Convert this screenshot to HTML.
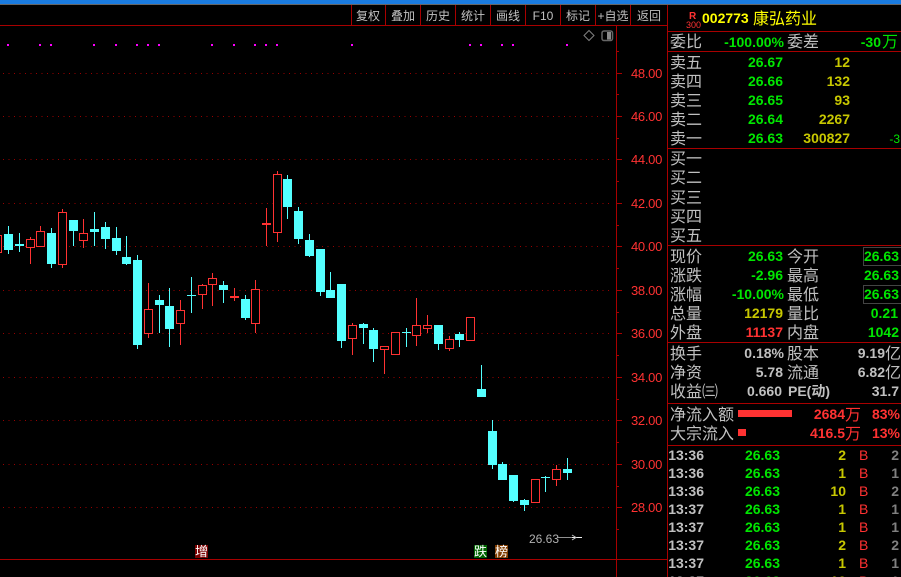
<!DOCTYPE html>
<html lang="zh"><head><meta charset="utf-8"><title>002773</title>
<style>
html,body{margin:0;padding:0;background:#000;width:901px;height:577px;overflow:hidden}
svg{display:block;position:absolute;left:0;top:0}
.c{font-family:"Liberation Sans","WenQuanYi Zen Hei","Noto Sans CJK SC",sans-serif;font-size:16px;fill:#c0c0c0}
.t{font-family:"Liberation Sans","WenQuanYi Zen Hei","Noto Sans CJK SC",sans-serif;font-size:12px;fill:#c0c0c0;text-anchor:middle}
.n{font-family:"Liberation Sans","WenQuanYi Zen Hei","Noto Sans CJK SC",sans-serif;font-size:14px;font-weight:bold;text-anchor:end}
.a{font-family:"Liberation Sans",sans-serif;font-size:13px;fill:#ff3232;letter-spacing:-.3px}
.b{font-family:"Liberation Sans",sans-serif;font-size:14px;fill:#ff3232}
.g{fill:#00e600}.y{fill:#c8c800}.r{fill:#ff3232}.w{fill:#c0c0c0}.d{fill:#808080}
</style></head><body>
<svg width="901" height="577" viewBox="0 0 901 577" xmlns="http://www.w3.org/2000/svg">
<rect width="901" height="577" fill="#000"/>
<rect width="901" height="4" fill="#1a7be0"/>
<rect y="4" width="901" height="1" fill="#666"/>

<!-- grid -->
<g stroke="#990000" stroke-width="1" stroke-dasharray="1 4.5" shape-rendering="crispEdges">
<path d="M3 73.5H612M3 116.5H612M3 159.5H612M3 203.5H612M3 246.5H612M3 290.5H612M3 333.5H612M3 377.5H612M3 420.5H612M3 464.5H612M3 507.5H612"/>
</g>

<!-- chrome lines -->
<g stroke="#a80000" stroke-width="1" shape-rendering="crispEdges" fill="none">
<path d="M0 25.5H667M351.5 5V25M385.5 5V25M420.5 5V25M455.5 5V25M490.5 5V25M525.5 5V25M560.5 5V25M595.5 5V25M630.5 5V25"/>
<path d="M616.5 25V577M667.5 5V577M0 559.5H667"/>
<path d="M668 31.5H901M668 51.5H901M668 148.5H901M668 245.5H901M668 342.5H901M668 403.5H901M668 445.5H901"/>
<path d="M617 73.5H622M617 116.5H622M617 159.5H622M617 203.5H622M617 246.5H622M617 290.5H622M617 333.5H622M617 377.5H622M617 420.5H622M617 464.5H622M617 507.5H622"/>
<path d="M617 51.5H619M617 94.5H619M617 138.5H619M617 181.5H619M617 225.5H619M617 268.5H619M617 312.5H619M617 355.5H619M617 399.5H619M617 442.5H619M617 486.5H619M617 529.5H619"/>
</g>

<!-- toolbar -->
<text class="t" x="368" y="20">复权</text>
<text class="t" x="403" y="20">叠加</text>
<text class="t" x="438" y="20">历史</text>
<text class="t" x="473" y="20">统计</text>
<text class="t" x="508" y="20">画线</text>
<text class="t" x="543" y="20">F10</text>
<text class="t" x="578" y="20">标记</text>
<text class="t" x="613" y="20">+自选</text>
<text class="t" x="649" y="20">返回</text>

<!-- magenta dots -->
<g fill="#ff00ff" shape-rendering="crispEdges">
<rect x="7" y="44" width="2" height="2"/><rect x="39" y="44" width="2" height="2"/><rect x="50" y="44" width="2" height="2"/><rect x="93" y="44" width="2" height="2"/><rect x="115" y="44" width="2" height="2"/><rect x="136" y="44" width="2" height="2"/><rect x="147" y="44" width="2" height="2"/><rect x="158" y="44" width="2" height="2"/><rect x="211" y="44" width="2" height="2"/><rect x="233" y="44" width="2" height="2"/><rect x="254" y="44" width="2" height="2"/><rect x="265" y="44" width="2" height="2"/><rect x="276" y="44" width="2" height="2"/><rect x="351" y="44" width="2" height="2"/><rect x="469" y="44" width="2" height="2"/><rect x="480" y="44" width="2" height="2"/><rect x="501" y="44" width="2" height="2"/><rect x="512" y="44" width="2" height="2"/><rect x="566" y="44" width="2" height="2"/>
</g>

<!-- top-right chart icons -->
<path d="M589 30.5L594 35.5L589 40.5L584 35.5Z" fill="none" stroke="#808080"/>
<rect x="602" y="31" width="10.500" height="9.500" rx="2" fill="none" stroke="#666" stroke-width="1.500"/>
<rect x="607" y="32" width="4" height="7.500" fill="#8a8a8a"/>

<!-- wicks -->
<g stroke="#54ffff" stroke-width="1" shape-rendering="crispEdges" fill="none">
<path d="M8.5 226V254M19.5 233V252M51.5 228V268M73.5 231V246M94.5 212V246M105.5 222V249M116.5 227V255M126.5 236V265M137.5 255V349M159.5 295V333M169.5 288V347M191.5 277V313M223.5 281V303M245.5 295V320M287.5 175V219M298.5 207V244M309.5 234V257M320.5 249V296M330.5 272V298M341.5 284V348M363.5 323V344M373.5 328V362M406.5 328V347M438.5 325V350M459.5 332V347M481.5 365V397M492.5 420V469M502.5 462V480M513.5 475V502M524.5 499V511M545.5 476V492M567.5 458V480"/>
</g>
<g stroke="#ff3232" stroke-width="1" shape-rendering="crispEdges" fill="none">
<path d="M30.5 237V264M40.5 226V247M62.5 209V268M83.5 219V248M148.5 283V338M180.5 300V345M202.5 284V309M212.5 273V306M234.5 288V301M255.5 280V333M266.5 208V246M277.5 171V242M352.5 323V355M384.5 346V374M416.5 298V346M427.5 315V333M449.5 336V351M556.5 465V486"/>
</g>
<!-- cyan bodies -->
<g fill="#54ffff" shape-rendering="crispEdges">
<rect x="4" y="234" width="9" height="16"/>
<rect x="15" y="244" width="9" height="2"/>
<rect x="47" y="233" width="9" height="31"/>
<rect x="69" y="220" width="9" height="11"/>
<rect x="90" y="229" width="9" height="3"/>
<rect x="101" y="227" width="9" height="12"/>
<rect x="112" y="238" width="9" height="13"/>
<rect x="122" y="257" width="9" height="7"/>
<rect x="133" y="260" width="9" height="85"/>
<rect x="155" y="300" width="9" height="5"/>
<rect x="165" y="306" width="9" height="23"/>
<rect x="187" y="295" width="9" height="1"/>
<rect x="219" y="285" width="9" height="5"/>
<rect x="241" y="299" width="9" height="19"/>
<rect x="283" y="179" width="9" height="28"/>
<rect x="294" y="211" width="9" height="28"/>
<rect x="305" y="240" width="9" height="16"/>
<rect x="316" y="249" width="9" height="43"/>
<rect x="326" y="290" width="9" height="8"/>
<rect x="337" y="284" width="9" height="57"/>
<rect x="359" y="324" width="9" height="4"/>
<rect x="369" y="330" width="9" height="19"/>
<rect x="402" y="332" width="9" height="1"/>
<rect x="434" y="325" width="9" height="19"/>
<rect x="455" y="334" width="9" height="6"/>
<rect x="477" y="389" width="9" height="8"/>
<rect x="488" y="431" width="9" height="34"/>
<rect x="498" y="464" width="9" height="16"/>
<rect x="509" y="475" width="9" height="26"/>
<rect x="520" y="500" width="9" height="5"/>
<rect x="541" y="477" width="9" height="1"/>
<rect x="563" y="469" width="9" height="4"/>
</g>
<!-- red bodies -->
<g fill="#000" stroke="#ff3232" stroke-width="1" shape-rendering="crispEdges">
<rect x="-8" y="235.500" width="9.500" height="17"/>
<rect x="26.500" y="239.500" width="8" height="8"/>
<rect x="36.500" y="231.500" width="8" height="15"/>
<rect x="58.500" y="212.500" width="8" height="52"/>
<rect x="79.500" y="233.500" width="8" height="7"/>
<rect x="144.500" y="309.500" width="8" height="24"/>
<rect x="176.500" y="310.500" width="8" height="13"/>
<rect x="198.500" y="285.500" width="8" height="9"/>
<rect x="208.500" y="278.500" width="8" height="6"/>
<rect x="230.500" y="296.500" width="8" height="1"/>
<rect x="251.500" y="289.500" width="8" height="34"/>
<rect x="262.500" y="223.500" width="8" height="1"/>
<rect x="273.500" y="174.500" width="8" height="58"/>
<rect x="348.500" y="325.500" width="8" height="13"/>
<rect x="380.500" y="346.500" width="8" height="3"/>
<rect x="391.500" y="332.500" width="8" height="22"/>
<rect x="412.500" y="325.500" width="8" height="10"/>
<rect x="423.500" y="325.500" width="8" height="3"/>
<rect x="445.500" y="339.500" width="8" height="9"/>
<rect x="466.500" y="317.500" width="8" height="23"/>
<rect x="531.500" y="479.500" width="8" height="23"/>
<rect x="552.500" y="469.500" width="8" height="10"/>
</g>

<!-- axis labels -->
<text class="a" x="631" y="78">48.00</text>
<text class="a" x="631" y="121">46.00</text>
<text class="a" x="631" y="164">44.00</text>
<text class="a" x="631" y="208">42.00</text>
<text class="a" x="631" y="251">40.00</text>
<text class="a" x="631" y="295">38.00</text>
<text class="a" x="631" y="338">36.00</text>
<text class="a" x="631" y="382">34.00</text>
<text class="a" x="631" y="425">32.00</text>
<text class="a" x="631" y="469">30.00</text>
<text class="a" x="631" y="512">28.00</text>

<!-- last price marker -->
<text x="529" y="543" font-family="'Liberation Sans',sans-serif" font-size="12" fill="#b0b0b0">26.63</text>
<path d="M558 537.500H572" stroke="#909090" shape-rendering="crispEdges"/>
<path d="M572 537.500H582" stroke="#f0f0f0" shape-rendering="crispEdges"/>
<path d="M572 535L576 537.500L572 540" stroke="#c0c0c0" fill="none"/>

<!-- markers -->
<rect x="195" y="545" width="13" height="13" fill="#7a0000"/>
<text x="195" y="556" font-family="'WenQuanYi Zen Hei','Noto Sans CJK SC',sans-serif" font-size="13" fill="#fff">增</text>
<rect x="474" y="545" width="13" height="13" fill="#006400"/>
<text x="474" y="556" font-family="'WenQuanYi Zen Hei','Noto Sans CJK SC',sans-serif" font-size="13" fill="#fff">跌</text>
<rect x="495" y="545" width="13" height="13" fill="#803c00"/>
<text x="495" y="556" font-family="'WenQuanYi Zen Hei','Noto Sans CJK SC',sans-serif" font-size="13" fill="#fff">榜</text>

<!-- header -->
<text x="689" y="19" font-family="'Liberation Sans',sans-serif" font-size="10" font-weight="bold" fill="#ff3232">R</text>
<text x="686" y="28" font-family="'Liberation Sans',sans-serif" font-size="9" fill="#ff3232">300</text>
<text x="702" y="23" font-family="'Liberation Sans',sans-serif" font-size="14" font-weight="bold" fill="#ffff00">002773</text>
<text x="753" y="24" font-family="'Liberation Sans','WenQuanYi Zen Hei','Noto Sans CJK SC',sans-serif" font-size="16" fill="#ffff00">康弘药业</text>

<!-- labels -->
<text class="c" x="670" y="47">委比</text><text class="c" x="787" y="47">委差</text>
<text class="c" x="670" y="68">卖五</text>
<text class="c" x="670" y="87">卖四</text>
<text class="c" x="670" y="106">卖三</text>
<text class="c" x="670" y="125">卖二</text>
<text class="c" x="670" y="144">卖一</text>
<text class="c" x="670" y="164">买一</text>
<text class="c" x="670" y="183">买二</text>
<text class="c" x="670" y="203">买三</text>
<text class="c" x="670" y="222">买四</text>
<text class="c" x="670" y="241">买五</text>
<text class="c" x="670" y="262">现价</text><text class="c" x="787" y="262">今开</text>
<text class="c" x="670" y="281">涨跌</text><text class="c" x="787" y="281">最高</text>
<text class="c" x="670" y="300">涨幅</text><text class="c" x="787" y="300">最低</text>
<text class="c" x="670" y="319">总量</text><text class="c" x="787" y="319">量比</text>
<text class="c" x="670" y="338">外盘</text><text class="c" x="787" y="338">内盘</text>
<text class="c" x="670" y="359">换手</text><text class="c" x="787" y="359">股本</text>
<text class="c" x="670" y="378">净资</text><text class="c" x="787" y="378">流通</text>
<text class="c" x="670" y="397">收益㈢</text>
<text class="c" x="670" y="420">净流入额</text>
<text class="c" x="670" y="439">大宗流入</text>

<!-- order book values -->
<text class="n g" x="784" y="47">-100.00%</text><text class="n g" x="881" y="47">-30</text><text class="c g" x="882" y="47">万</text>
<text class="n g" x="783" y="67">26.67</text><text class="n y" x="850" y="67">12</text>
<text class="n g" x="783" y="86">26.66</text><text class="n y" x="850" y="86">132</text>
<text class="n g" x="783" y="105">26.65</text><text class="n y" x="850" y="105">93</text>
<text class="n g" x="783" y="124">26.64</text><text class="n y" x="850" y="124">2267</text>
<text class="n g" x="783" y="143">26.63</text><text class="n y" x="850" y="143">300827</text>
<text x="900" y="143" text-anchor="end" font-family="'Liberation Sans',sans-serif" font-size="12" class="g">-3</text>

<!-- quote values -->
<rect x="863.500" y="247.500" width="38" height="18" fill="none" stroke="#444" shape-rendering="crispEdges"/>
<rect x="863.500" y="285.500" width="38" height="18" fill="none" stroke="#444" shape-rendering="crispEdges"/>
<text class="n g" x="783" y="261">26.63</text><text class="n g" x="899" y="261">26.63</text>
<text class="n g" x="783" y="280">-2.96</text><text class="n g" x="899" y="280">26.63</text>
<text class="n g" x="784" y="299">-10.00%</text><text class="n g" x="899" y="299">26.63</text>
<text class="n y" x="783" y="318">12179</text><text class="n g" x="898" y="318">0.21</text>
<text class="n r" x="783" y="337">11137</text><text class="n g" x="899" y="337">1042</text>
<text class="n w" x="784" y="358">0.18%</text><text class="n w" x="885" y="358">9.19</text><text class="c" x="885" y="359">亿</text>
<text class="n w" x="783" y="377">5.78</text><text class="n w" x="885" y="377">6.82</text><text class="c" x="885" y="378">亿</text>
<text class="n w" x="782" y="396">0.660</text><text class="n w" x="830" y="396">PE(动)</text><text class="n w" x="899" y="396">31.7</text>

<!-- flow -->
<rect x="738" y="410" width="54" height="7" fill="#ff3232"/>
<rect x="738" y="429" width="8" height="7" fill="#ff3232"/>
<text class="n r" x="845" y="419">2684</text><text class="c r" x="845" y="420">万</text><text class="n r" x="900" y="419">83%</text>
<text class="n r" x="845" y="438">416.5</text><text class="c r" x="845" y="439">万</text><text class="n r" x="900" y="438">13%</text>

<!-- ticks -->
<g>
<text class="n w" x="704" y="460">13:36</text><text class="n g" x="780" y="460">26.63</text><text class="n y" x="846" y="460">2</text><text class="b" x="859" y="460">B</text><text class="n d" x="899" y="460">2</text>
<text class="n w" x="704" y="478">13:36</text><text class="n g" x="780" y="478">26.63</text><text class="n y" x="846" y="478">1</text><text class="b" x="859" y="478">B</text><text class="n d" x="899" y="478">1</text>
<text class="n w" x="704" y="496">13:36</text><text class="n g" x="780" y="496">26.63</text><text class="n y" x="846" y="496">10</text><text class="b" x="859" y="496">B</text><text class="n d" x="899" y="496">2</text>
<text class="n w" x="704" y="514">13:37</text><text class="n g" x="780" y="514">26.63</text><text class="n y" x="846" y="514">1</text><text class="b" x="859" y="514">B</text><text class="n d" x="899" y="514">1</text>
<text class="n w" x="704" y="532">13:37</text><text class="n g" x="780" y="532">26.63</text><text class="n y" x="846" y="532">1</text><text class="b" x="859" y="532">B</text><text class="n d" x="899" y="532">1</text>
<text class="n w" x="704" y="550">13:37</text><text class="n g" x="780" y="550">26.63</text><text class="n y" x="846" y="550">2</text><text class="b" x="859" y="550">B</text><text class="n d" x="899" y="550">2</text>
<text class="n w" x="704" y="568">13:37</text><text class="n g" x="780" y="568">26.63</text><text class="n y" x="846" y="568">1</text><text class="b" x="859" y="568">B</text><text class="n d" x="899" y="568">1</text>
<text class="n w" x="704" y="586">13:37</text><text class="n g" x="780" y="586">26.63</text><text class="n y" x="846" y="586">10</text><text class="b" x="859" y="586">B</text><text class="n d" x="899" y="586">1</text>
</g>
</svg>
</body></html>
